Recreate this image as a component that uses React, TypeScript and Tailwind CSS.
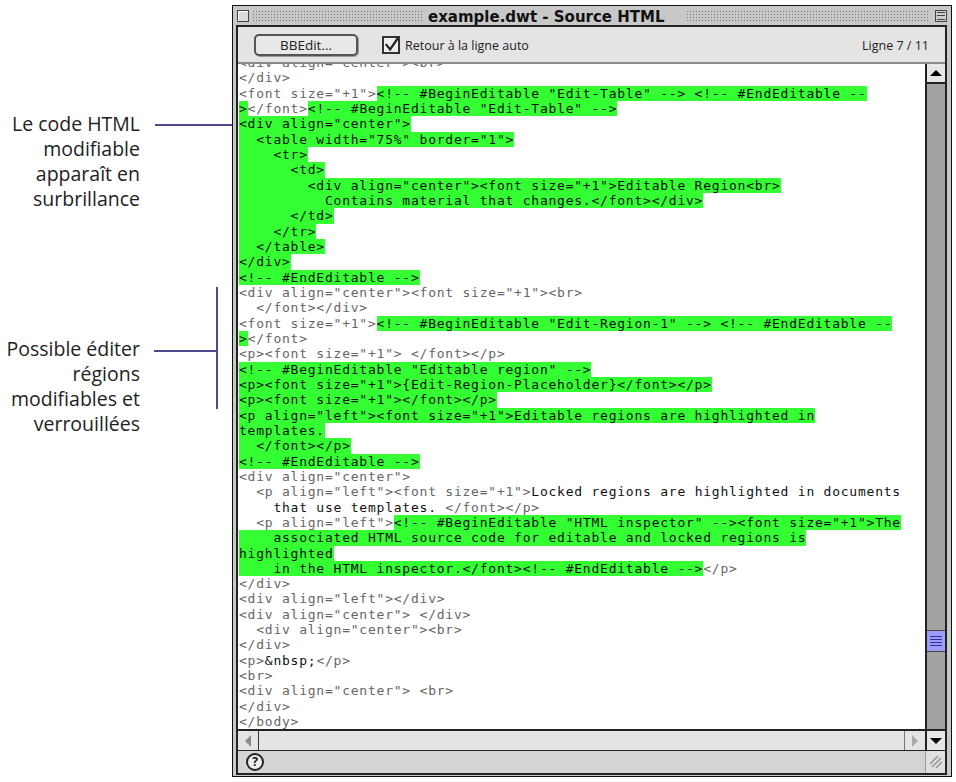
type Kind = "tag" | "text" | "mark"
type Segment = [string, Kind?]

// one entry per source line, "mark" is the green highlight
const sourceLines: Segment[][] = [
  [['<div align="center"><br>']],
  [["</div>"]],
  [['<font size="+1">'], ['<!-- #BeginEditable "Edit-Table" --> <!-- #EndEditable --', "mark"]],
  [[">", "mark"], ["</font>"], ['<!-- #BeginEditable "Edit-Table" -->', "mark"]],
  [['<div align="center">', "mark"]],
  [['  <table width="75%" border="1">', "mark"]],
  [["    <tr>", "mark"]],
  [["      <td>", "mark"]],
  [['        <div align="center"><font size="+1">Editable Region<br>', "mark"]],
  [["          Contains material that changes.</font></div>", "mark"]],
  [["      </td>", "mark"]],
  [["    </tr>", "mark"]],
  [["  </table>", "mark"]],
  [["</div>", "mark"]],
  [["<!-- #EndEditable -->", "mark"]],
  [['<div align="center"><font size="+1"><br>']],
  [["  </font></div>"]],
  [['<font size="+1">'], ['<!-- #BeginEditable "Edit-Region-1" --> <!-- #EndEditable --', "mark"]],
  [[">", "mark"], ["</font>"]],
  [['<p><font size="+1"> </font></p>']],
  [['<!-- #BeginEditable "Editable region" -->', "mark"]],
  [['<p><font size="+1">{Edit-Region-Placeholder}</font></p>', "mark"]],
  [['<p><font size="+1"></font></p>', "mark"]],
  [['<p align="left"><font size="+1">Editable regions are highlighted in', "mark"]],
  [["templates.", "mark"]],
  [["  </font></p>", "mark"]],
  [["<!-- #EndEditable -->", "mark"]],
  [['<div align="center">']],
  [['  <p align="left"><font size="+1">'], ["Locked regions are highlighted in documents", "text"]],
  [["    that use templates. ", "text"], ["</font></p>"]],
  [['  <p align="left">'], ['<!-- #BeginEditable "HTML inspector" --><font size="+1">The', "mark"]],
  [["    associated HTML source code for editable and locked regions is", "mark"]],
  [["highlighted", "mark"]],
  [["    in the HTML inspector.</font><!-- #EndEditable -->", "mark"], ["</p>"]],
  [["</div>"]],
  [['<div align="left"></div>']],
  [['<div align="center"> </div>']],
  [['  <div align="center"><br>']],
  [["</div>"]],
  [["<p>"], ["&nbsp;", "text"], ["</p>"]],
  [["<br>"]],
  [['<div align="center"> <br>']],
  [["</div>"]],
  [["</body>"]],
]

function CodeSegment({ text, kind }: { text: string; kind?: Kind }) {
  if (kind === "mark") {
    return <span className="inline-block h-[15.33px] bg-[#33ff33] align-top text-[#111]">{text}</span>
  }
  if (kind === "text") {
    return <span className="inline-block h-[15.33px] align-top text-[#111]">{text}</span>
  }
  return <span className="inline-block h-[15.33px] align-top">{text}</span>
}

function Callout({ lines, lineClass }: { lines: string[]; lineClass: string }) {
  return (
    <div className="flex items-start">
      <div className="w-[140px] text-right text-[19.5px] leading-[25px] whitespace-nowrap text-[#222]">
        {lines.map((line) => (
          <div key={line}>{line}</div>
        ))}
      </div>
      <div className={lineClass} />
    </div>
  )
}

export default function App() {
  return (
    <div
      className="flex h-[782px] w-[956px] overflow-hidden bg-white"
      style={{ fontFamily: '"Open Sans", "Noto Sans", sans-serif' }}
    >
      <div className="flex w-[232px] shrink-0 flex-col">
        <div className="mt-[111px]">
          <Callout
            lines={["Le code HTML", "modifiable", "apparaît en", "surbrillance"]}
            lineClass="mt-[13px] ml-[15px] h-0.5 w-[77px] bg-[#4f4a91]"
          />
        </div>
        <div className="mt-[76px] flex items-start">
          <div className="mt-[49px]">
            <Callout
              lines={["Possible éditer", "régions", "modifiables et", "verrouillées"]}
              lineClass="mt-[14px] ml-[14px] h-0.5 w-[63px] bg-[#4f4a91]"
            />
          </div>
          <div className="-ml-px h-[122px] w-0.5 shrink-0 bg-[#4f4a91]" />
        </div>
      </div>

      <div className="mt-[5px] flex h-[772px] w-[720px] shrink-0 flex-col border border-[#111] bg-[#c8c8c8] pr-1 pb-px pl-[3px]">
        <div className="flex h-[19px] shrink-0 items-center pl-px">
          <div className="h-3 w-3 border border-[#444] bg-[#ddd] shadow-[inset_1px_1px_0_#fff]" />
          <div className="ml-[3px] h-3 w-[172px] bg-[radial-gradient(#777_0.8px,transparent_0.9px)] bg-[length:3px_3px]" />
          <div
            className="ml-1 pt-1 text-[15px] leading-[15px] font-bold whitespace-nowrap text-[#111]"
            style={{ fontFamily: '"DejaVu Sans", sans-serif' }}
          >
            example.dwt - Source HTML
          </div>
          <div className="mr-[5px] ml-[21px] h-3 flex-1 bg-[radial-gradient(#777_0.8px,transparent_0.9px)] bg-[length:3px_3px]" />
          <div className="flex h-3 w-3 flex-col justify-between border border-[#444] bg-[#ccc] px-px py-px">
            <div className="h-px bg-[#444]" />
            <div className="h-px bg-[#444]" />
            <div className="h-px bg-[#444]" />
          </div>
        </div>

        <div className="flex h-[750px] shrink-0 flex-col border-2 border-[#222]">
          <div className="flex h-[37px] shrink-0 items-center border-b-2 border-[#8a8a8a] bg-[#e4e4e4] pr-4 pl-4">
            <button className="h-[22px] w-[104px] rounded-[5px] border-2 border-[#555] bg-[#e8e8e8] text-[13.5px] leading-4 text-[#222] shadow-[1px_1px_0_#999]">
              BBEdit...
            </button>
            <div className="ml-6 flex h-[18px] w-[18px] items-center justify-center border-2 border-[#333] bg-[#eee]">
              <svg viewBox="0 0 16 16" className="h-4 w-4" fill="none" stroke="#222" strokeWidth="2.6">
                <path d="M2 7 L7 13 L16 0" />
              </svg>
            </div>
            <span className="mt-1 ml-[5px] text-[12.5px] text-[#222]">Retour à la ligne auto</span>
            <span className="mt-1 ml-auto text-[12.5px] text-[#222]">Ligne 7 / 11</span>
          </div>

          <div className="flex h-[665px] shrink-0">
            <div className="min-w-0 flex-1 overflow-hidden bg-white pl-px">
              <div className="-mt-[9px] font-['DejaVu_Sans_Mono'] text-[13px] leading-[15.33px] tracking-[0.77px] text-[#666]">
                {sourceLines.map((segments, i) => (
                  <div key={i} className="h-[15.33px] whitespace-pre">
                    {segments.map(([text, kind], j) => (
                      <CodeSegment key={j} text={text} kind={kind} />
                    ))}
                  </div>
                ))}
              </div>
            </div>

            <div className="flex w-5 shrink-0 flex-col border-l-2 border-[#222] bg-[#a3a3a3]">
              <div className="flex h-5 items-center justify-center border-b-2 border-[#222] bg-[#e6e6e6]">
                <div className="h-0 w-0 border-x-[6px] border-b-[6px] border-x-transparent border-b-black" />
              </div>
              <div className="flex-1" />
              <div className="flex h-[22px] flex-col justify-center gap-[2px] border-y border-[#444] bg-[#9d9dfb] px-[3px]">
                <div className="h-px bg-[#33338a]" />
                <div className="h-px bg-[#33338a]" />
                <div className="h-px bg-[#33338a]" />
                <div className="h-px bg-[#33338a]" />
              </div>
              <div className="h-[77px]" />
            </div>
          </div>

          <div className="flex h-[21px] shrink-0 border-t-2 border-[#222] bg-[#e4e4e4]">
            <div className="flex w-[21px] items-center justify-center border-r border-[#333]">
              <div className="h-0 w-0 border-y-[6px] border-r-[6px] border-y-transparent border-r-[#8a8a8a]" />
            </div>
            <div className="flex-1" />
            <div className="flex w-[21px] items-center justify-center border-l border-[#777]">
              <div className="h-0 w-0 border-y-[6px] border-l-[6px] border-y-transparent border-l-[#a9a9a9]" />
            </div>
            <div className="flex w-5 items-center justify-center border-l-2 border-[#222] bg-[#e6e6e6]">
              <div className="h-0 w-0 border-x-[6px] border-t-[6px] border-x-transparent border-t-black" />
            </div>
          </div>

          <div className="flex h-[23px] shrink-0 items-center justify-between border-t border-[#222] bg-[#d4d4d4] pl-2">
            <div className="flex h-[18px] w-[18px] items-center justify-center rounded-full border-2 border-[#222] bg-[#eee] text-[12px] leading-[14px] font-bold text-[#111]">
              ?
            </div>
            <div className="flex h-full w-[20px] items-center justify-center border-l border-[#999] bg-[#e0e0e0]">
              <svg viewBox="0 0 14 14" className="h-3.5 w-3.5" stroke="#999" strokeWidth="1.6">
                <path d="M1 9 L9 1 M3 12 L12 3 M7 13 L13 7" />
              </svg>
            </div>
          </div>
        </div>
      </div>
    </div>
  )
}
